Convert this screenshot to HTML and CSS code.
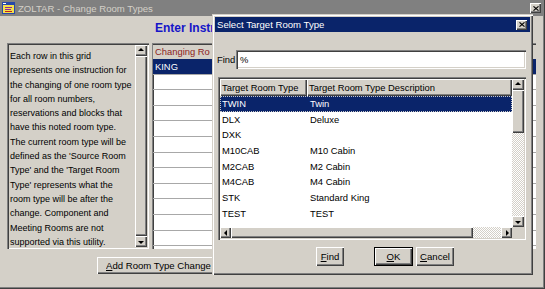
FILE: index.html
```html
<!DOCTYPE html>
<html lang="en">
<head>
  <meta charset="UTF-8">
  <title>ZOLTAR - Change Room Types</title>
  <link rel="stylesheet" href="styles.css">
</head>
<body>

<div class="window">
  <div class="titlebar">
    <svg class="appicon" viewBox="0 0 14 13">
      <rect x="0" y="0" width="13" height="12" fill="#2848a8"/>
      <rect x="1" y="3" width="11" height="8" fill="#f4e04c"/>
      <rect x="3" y="5" width="7" height="1" fill="#8a2a9a"/>
      <rect x="3" y="7" width="6" height="1" fill="#8a2a9a"/>
      <rect x="3" y="9" width="7" height="1" fill="#c02020"/>
      <rect x="1" y="1" width="3" height="1" fill="#fff"/>
    </svg>
    <span class="title">ZOLTAR - Change Room Types</span>
    <span class="xbtn"><svg viewBox="0 0 7 6"><path d="M0.5 0.5 L6.5 5.5 M6.5 0.5 L0.5 5.5" stroke="#000" stroke-width="1.4"/></svg></span>
  </div>

  <div class="content">
    <h1 class="heading"><span class="heading-text">Enter Instructions</span></h1>

    <div class="main">
      <!-- notes panel -->
      <div class="notes">
        <div class="notes-text">
          Each row in this grid<br>
          represents one instruction for<br>
          the changing of one room type<br>
          for all room numbers,<br>
          reservations and blocks that<br>
          have this noted room type.<br>
          The current room type will be<br>
          defined as the 'Source Room<br>
          Type' and the 'Target Room<br>
          Type' represents what the<br>
          room type will be after the<br>
          change. Component and<br>
          Meeting Rooms are not<br>
          supported via this utility.
        </div>
        <div class="vscroll">
          <span class="sbtn up"></span>
          <span class="thumb grow"></span>
          <span class="sbtn down"></span>
        </div>
      </div>

      <!-- change grid behind the dialog -->
      <div class="changes">
        <div class="changes-head"><span class="cell">Changing Room Type</span></div>
        <div class="changes-row sel"><span class="cell">KING</span></div>
        <div class="changes-row"></div>
        <div class="changes-row"></div>
        <div class="changes-row"></div>
        <div class="changes-row"></div>
        <div class="changes-row"></div>
        <div class="changes-row"></div>
        <div class="changes-row"></div>
        <div class="changes-row"></div>
        <div class="changes-row"></div>
        <div class="changes-row"></div>
        <div class="changes-row"></div>
      </div>
    </div>

    <div class="actions">
      <button class="btn wide"><span class="btn-label"><u>A</u>dd Room Type Change Instruction</span></button>
    </div>
  </div>

  <!-- LOV dialog -->
  <div class="dialog">
    <div class="dlg-title">
      <span class="title">Select Target Room Type</span>
      <span class="xbtn"><svg viewBox="0 0 7 6"><path d="M0.5 0.5 L6.5 5.5 M6.5 0.5 L0.5 5.5" stroke="#000" stroke-width="1.4"/></svg></span>
    </div>

    <div class="find-row">
      <label class="find-label">Find</label>
      <div class="field">%</div>
    </div>

    <div class="picklist">
      <div class="table">
        <div class="thead">
          <span class="c1">Target Room Type</span>
          <span class="c2">Target Room Type Description</span>
        </div>
        <div class="trow sel"><span class="c1">TWIN</span><span class="c2">Twin</span></div>
        <div class="trow"><span class="c1">DLX</span><span class="c2">Deluxe</span></div>
        <div class="trow"><span class="c1">DXK</span><span class="c2"></span></div>
        <div class="trow"><span class="c1">M10CAB</span><span class="c2">M10 Cabin</span></div>
        <div class="trow"><span class="c1">M2CAB</span><span class="c2">M2 Cabin</span></div>
        <div class="trow"><span class="c1">M4CAB</span><span class="c2">M4 Cabin</span></div>
        <div class="trow"><span class="c1">STK</span><span class="c2">Standard King</span></div>
        <div class="trow"><span class="c1">TEST</span><span class="c2">TEST</span></div>
      </div>
      <div class="vscroll">
        <span class="sbtn up"></span>
        <span class="thumb vthumb"></span>
        <span class="track"></span>
        <span class="sbtn down"></span>
      </div>
      <div class="hscroll">
        <span class="sbtn left"></span>
        <span class="thumb hthumb"></span>
        <span class="track"></span>
        <span class="sbtn right"></span>
      </div>
      <div class="corner"></div>
    </div>

    <div class="dlg-buttons">
      <button class="btn b-find"><u>F</u>ind</button>
      <button class="btn b-ok default"><u>O</u>K</button>
      <button class="btn b-cancel"><u>C</u>ancel</button>
    </div>
  </div>
</div>

</body>
</html>
```

FILE: styles.css
```css
* { box-sizing: border-box; }
body { margin: 0; font-family: "Liberation Sans", Arial, sans-serif; font-size: 9.4px; color: #000; background: #d4d0c8; }

.window { position: relative; width: 545px; height: 289px; background: #d4d0c8; box-shadow: inset -1px -1px #404040, inset -2px -2px #808080; overflow: hidden; }

/* title bars */
.titlebar { height: 16px; margin-right: 2px; padding: 0 2px 0 2px; display: flex; align-items: center; background: #808080; color: #d4d0c8; }
.titlebar .title { flex: 1; margin-left: 2px; font-size: 9.6px; white-space: nowrap; }
.appicon { width: 14px; height: 13px; display: block; }
.xbtn { width: 11px; height: 10px; display: flex; align-items: center; justify-content: center; background: #d4d0c8; box-shadow: inset 1px 1px #fff, inset -1px -1px #404040, inset -2px -2px #808080; }
.xbtn svg { width: 6px; height: 5px; display: block; }

/* main window content */
.content { padding: 0 9px 0 7px; }
.heading { margin: 3px 0 6px; padding-left: 148px; font-size: 12px; line-height: 18px; font-weight: bold; color: #1515c8; white-space: nowrap; }
.heading-text { display: block; width: 57px; overflow: hidden; }
.main { display: flex; gap: 3px; height: 206px; }

.notes { width: 142px; display: flex; padding: 2px; box-shadow: inset 1px 1px #808080, inset 2px 2px #404040, inset -1px -1px #fff, inset -2px -2px #d4d0c8; }
.notes-text { flex: 1; padding: 4px 0 0 1px; font-size: 9px; line-height: 14.3px; white-space: nowrap; overflow: hidden; }
.notes .vscroll { width: 12px; }

.changes { flex: 1; padding: 2px 0 0 1px; background: #fff; box-shadow: inset 1px 1px #808080, inset 2px 2px #404040; overflow: hidden; }
.changes-head { height: 14px; line-height: 14px; background: #d4d0c8; color: #8c1c1c; white-space: nowrap; }
.changes-row { height: 15.6px; line-height: 15px; border-bottom: 1px solid #a8a8a8; }
.changes-row.sel { background: #0a246a; color: #fff; }
.cell { display: block; width: 57px; padding-left: 2px; overflow: hidden; white-space: nowrap; }

.actions { margin-top: 8px; padding-left: 90px; }

/* buttons */
.btn { height: 17px; padding: 0; border: none; font: inherit; font-size: 9.6px; color: #000; background: #d4d0c8; box-shadow: inset 1px 1px #fff, inset -1px -1px #404040, inset -2px -2px #808080; }
.btn.wide { width: 190px; text-align: left; padding-left: 9px; }
.btn-label { display: block; width: 106px; overflow: hidden; white-space: nowrap; }

/* scrollbars */
.vscroll { display: flex; flex-direction: column; }
.hscroll { display: flex; }
.sbtn { position: relative; flex: none; width: 12px; height: 11px; background: #d4d0c8; box-shadow: inset 1px 1px #fff, inset -1px -1px #404040, inset -2px -2px #808080; }
.hscroll .sbtn { width: 11px; height: 11px; }
.sbtn::before { content: ""; position: absolute; left: 50%; top: 50%; width: 0; height: 0; border: 3px solid transparent; }
.sbtn.up::before { margin: -3px 0 0 -3px; border-top: 0; border-bottom-color: #000; }
.sbtn.down::before { margin: -1px 0 0 -3px; border-bottom: 0; border-top-color: #000; }
.sbtn.left::before { margin: -3px 0 0 -2px; border-left: 0; border-right-color: #000; }
.sbtn.right::before { margin: -3px 0 0 -1px; border-right: 0; border-left-color: #000; }
.thumb { background: #d4d0c8; box-shadow: inset 1px 1px #fff, inset -1px -1px #404040, inset -2px -2px #808080; }
.thumb.grow { flex: 1; }
.track { flex: 1; background: repeating-conic-gradient(#fff 0 25%, #d4d0c8 0 50%) 0 0 / 2px 2px; }

/* dialog */
.dialog { position: absolute; left: 212px; top: 14px; width: 321px; height: 261px; padding: 3px; background: #d4d0c8; box-shadow: inset 1px 1px #d4d0c8, inset 2px 2px #fff, inset -1px -1px #404040, inset -2px -2px #808080; }
.dlg-title { height: 15px; padding: 0 3px 0 2px; display: flex; align-items: center; background: #0a246a; color: #fff; }
.dlg-title .title { flex: 1; font-size: 9.6px; white-space: nowrap; }

.find-row { display: flex; align-items: center; height: 19px; margin-top: 18px; }
.find-label { width: 21px; padding-left: 2px; }
.field { width: 290px; height: 19px; padding: 0 4px; line-height: 19px; background: #fff; box-shadow: inset 1px 1px #808080, inset 2px 2px #404040, inset -1px -1px #fff, inset -2px -2px #d4d0c8; }

.picklist { display: grid; grid-template-columns: 1fr 12px; grid-template-rows: 1fr 11px; width: 308px; height: 163px; margin: 8px 0 0 3px; padding: 2px; background: #fff; box-shadow: inset 1px 1px #808080, inset 2px 2px #404040, inset -1px -1px #fff, inset -2px -2px #d4d0c8; }
.table { overflow: hidden; white-space: nowrap; }
.thead { display: flex; height: 17px; line-height: 17px; background: #d4d0c8; }
.thead span { box-shadow: inset 1px 1px #fff, inset -1px -1px #404040, inset -2px -2px #808080; }
.c1 { width: 87px; padding-left: 2px; flex: none; }
.c2 { flex: 1; padding-left: 3px; }
.thead .c2 { padding-left: 2px; }
.trow { display: flex; height: 15.7px; line-height: 15.7px; }
.trow.sel { background: #0a246a; color: #fff; outline: 1px dotted #c8c8c8; outline-offset: -1px; }
.vthumb { height: 43px; flex: none; }
.hthumb { width: 242px; flex: none; }
.corner { background: #d4d0c8; }

.dlg-buttons { display: flex; height: 19px; margin-top: 7px; padding-left: 101px; }
.dlg-buttons .btn { height: 19px; }
.b-find { width: 28px; margin-right: 30px; }
.b-ok { width: 39px; margin-right: 3px; }
.b-ok.default { box-shadow: inset 0 0 0 1px #000, inset 2px 2px #fff, inset -2px -2px #404040, inset -3px -3px #808080; }
.b-cancel { width: 38px; }
```
